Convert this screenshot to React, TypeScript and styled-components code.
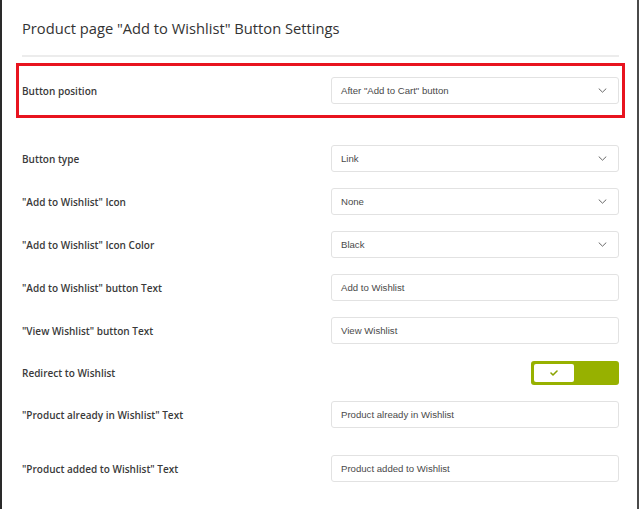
import React from "react";
import styled, { createGlobalStyle } from "styled-components";

const Global = createGlobalStyle`
  html, body { margin: 0; padding: 0; background: #fff; }
  body { font-family: "Open Sans", "Liberation Sans", sans-serif; }
`;

const Page = styled.div`
  box-sizing: border-box;
  width: 639px;
  min-height: 509px;
  border-left: 2px solid #2a2a2a;
  border-right: 2px solid #4a4a4a;
  padding: 0 18px 0 20px;
  background: #fff;
`;

const Title = styled.h2`
  margin: 0;
  padding-top: 18px;
  height: 57px;
  box-sizing: border-box;
  font-size: 14.7px;
  font-weight: 400;
  line-height: 20px;
  color: #333;
  border-bottom: 2px solid #ececec;
`;

const Highlight = styled.div`
  margin: 6px -6px 0 -6px;
  padding: 11px 3px;
  border: 3px solid #e8141f;
`;

const Rows = styled.div`
  padding-top: 27px;
  display: flex;
  flex-direction: column;
`;

const Row = styled.div<{ $gap?: number; $height?: number }>`
  display: grid;
  grid-template-columns: 1fr 288px;
  align-items: center;
  min-height: ${(p) => p.$height ?? 27}px;
  margin-bottom: ${(p) => p.$gap ?? 16}px;
`;

const Label = styled.div`
  font-size: 10px;
  font-weight: 600;
  color: #3a3a3a;
  white-space: nowrap;
`;

const Field = styled.div`
  box-sizing: border-box;
  height: 27px;
  display: flex;
  align-items: center;
  justify-content: space-between;
  padding: 0 11px 0 9px;
  border: 1px solid #e2e2e2;
  border-radius: 3px;
  background: #fff;
  font-family: "Liberation Sans", Arial, sans-serif;
  font-size: 9.6px;
  color: #4a4a4a;
`;

const ToggleCell = styled.div`
  display: flex;
  justify-content: flex-end;
`;

const Toggle = styled.div`
  box-sizing: border-box;
  width: 88px;
  height: 24px;
  padding: 3px;
  border-radius: 3px;
  background: #97b100;
  display: flex;
  align-items: center;
`;

const Knob = styled.div`
  width: 40px;
  height: 18px;
  border-radius: 2px;
  background: #fff;
  display: flex;
  align-items: center;
  justify-content: center;
`;

const Chevron = () => (
  <svg width="9" height="5" viewBox="0 0 9 5" fill="none">
    <path d="M1 0.8l3.5 3.4 3.5-3.4" stroke="#666" strokeWidth="1" strokeLinecap="round" strokeLinejoin="round" />
  </svg>
);

const Check = () => (
  <svg width="8" height="6" viewBox="0 0 8 6" fill="none">
    <path d="M1 3l2 2 4-4" stroke="#8aa300" strokeWidth="1.6" strokeLinecap="round" strokeLinejoin="round" />
  </svg>
);

const Select = ({ value }: { value: string }) => (
  <Field>
    <span>{value}</span>
    <Chevron />
  </Field>
);

const Text = ({ value }: { value: string }) => (
  <Field>
    <span>{value}</span>
  </Field>
);

export default function App() {
  return (
    <>
      <Global />
      <Page>
        <Title>Product page "Add to Wishlist" Button Settings</Title>
        <Highlight>
          <Row $gap={0}>
            <Label>Button position</Label>
            <Select value={'After "Add to Cart" button'} />
          </Row>
        </Highlight>
        <Rows>
          <Row>
            <Label>Button type</Label>
            <Select value="Link" />
          </Row>
          <Row>
            <Label>"Add to Wishlist" Icon</Label>
            <Select value="None" />
          </Row>
          <Row>
            <Label>"Add to Wishlist" Icon Color</Label>
            <Select value="Black" />
          </Row>
          <Row>
            <Label>"Add to Wishlist" button Text</Label>
            <Text value="Add to Wishlist" />
          </Row>
          <Row $gap={17}>
            <Label>"View Wishlist" button Text</Label>
            <Text value="View Wishlist" />
          </Row>
          <Row $gap={16} $height={24}>
            <Label>Redirect to Wishlist</Label>
            <ToggleCell>
              <Toggle>
                <Knob>
                  <Check />
                </Knob>
              </Toggle>
            </ToggleCell>
          </Row>
          <Row $gap={27}>
            <Label>"Product already in Wishlist" Text</Label>
            <Text value="Product already in Wishlist" />
          </Row>
          <Row>
            <Label>"Product added to Wishlist" Text</Label>
            <Text value="Product added to Wishlist" />
          </Row>
        </Rows>
      </Page>
    </>
  );
}
